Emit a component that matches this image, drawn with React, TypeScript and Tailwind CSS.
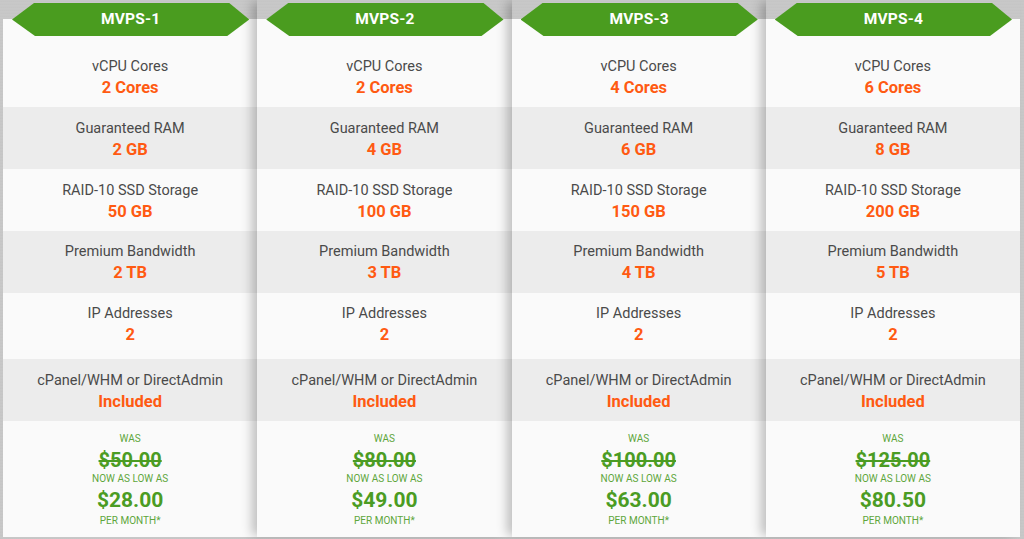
import React from "react";

type Plan = {
  name: string;
  cores: string;
  ram: string;
  storage: string;
  bw: string;
  ip: string;
  was: string;
  now: string;
};

const plans: Plan[] = [
  { name: "MVPS-1", cores: "2 Cores", ram: "2 GB", storage: "50 GB", bw: "2 TB", ip: "2", was: "$50.00", now: "$28.00" },
  { name: "MVPS-2", cores: "2 Cores", ram: "4 GB", storage: "100 GB", bw: "3 TB", ip: "2", was: "$80.00", now: "$49.00" },
  { name: "MVPS-3", cores: "4 Cores", ram: "6 GB", storage: "150 GB", bw: "4 TB", ip: "2", was: "$100.00", now: "$63.00" },
  { name: "MVPS-4", cores: "6 Cores", ram: "8 GB", storage: "200 GB", bw: "5 TB", ip: "2", was: "$125.00", now: "$80.50" },
];

function Feature({ label, value, cls }: { label: string; value: string; cls: string }) {
  return (
    <div className={`flex flex-col items-center ${cls}`}>
      <div className="text-[14.5px] leading-[22px] text-[#4a4a4a]">{label}</div>
      <div className="text-[16.5px] leading-[20px] font-bold text-[#ff5a12]">{value}</div>
    </div>
  );
}

function Card({ p, first }: { p: Plan; first: boolean }) {
  return (
    <div
      className={`relative flex-1 flex flex-col pt-[19px] ${
        first ? "" : "shadow-[-7px_0_10px_-2px_rgba(0,0,0,0.24)]"
      }`}
    >
      <div className="absolute left-[9px] right-[8px] top-[3px] h-[33px] bg-[#4a9c1f] [clip-path:polygon(0_50%,22px_0,calc(100%-20px)_0,100%_50%,calc(100%-22px)_100%,23px_100%)] flex items-center justify-center z-10">
        <span className="text-white font-bold text-[15.5px] tracking-[0.2px]">{p.name}</span>
      </div>
      <Feature label="vCPU Cores" value={p.cores} cls="h-[88px] pt-[37px] bg-[#fafafa]" />
      <Feature label="Guaranteed RAM" value={p.ram} cls="h-[62px] pt-[11px] bg-[#ececec]" />
      <Feature label="RAID-10 SSD Storage" value={p.storage} cls="h-[62px] pt-[11px] bg-[#fafafa]" />
      <Feature label="Premium Bandwidth" value={p.bw} cls="h-[62px] pt-[10px] bg-[#ececec]" />
      <Feature label="IP Addresses" value={p.ip} cls="h-[66px] pt-[10px] bg-[#fafafa]" />
      <Feature label="cPanel/WHM or DirectAdmin" value="Included" cls="h-[62px] pt-[11px] bg-[#ececec]" />
      <div className="h-[116px] flex flex-col items-center bg-[#fafafa] text-[#4b9c23] pt-[11px]">
        <div className="text-[10px] leading-[14px] text-[#5ea63a]">WAS</div>
        <div className="text-[20px] leading-[28px] font-bold line-through decoration-[1.5px]">{p.was}</div>
        <div className="text-[10px] leading-[10px] text-[#5ea63a]">NOW AS LOW AS</div>
        <div className="text-[21px] leading-[32px] font-bold">{p.now}</div>
        <div className="text-[10px] leading-[10px] text-[#5ea63a]">PER MONTH*</div>
      </div>
    </div>
  );
}

export default function App() {
  return (
    <div
      className="w-[1024px] h-[539px] overflow-hidden bg-[#c6c6c6] bg-[repeating-linear-gradient(0deg,#c9c9c9_0px,#c2c2c2_1px,#cccccc_2px,#c4c4c4_3px)] pl-[3px] pr-[4px] pb-[2px]"
      style={{ fontFamily: "Roboto, 'Open Sans', sans-serif" }}
    >
      <div className="flex h-full">
        {plans.map((p, i) => (
          <Card key={p.name} p={p} first={i === 0} />
        ))}
      </div>
    </div>
  );
}
